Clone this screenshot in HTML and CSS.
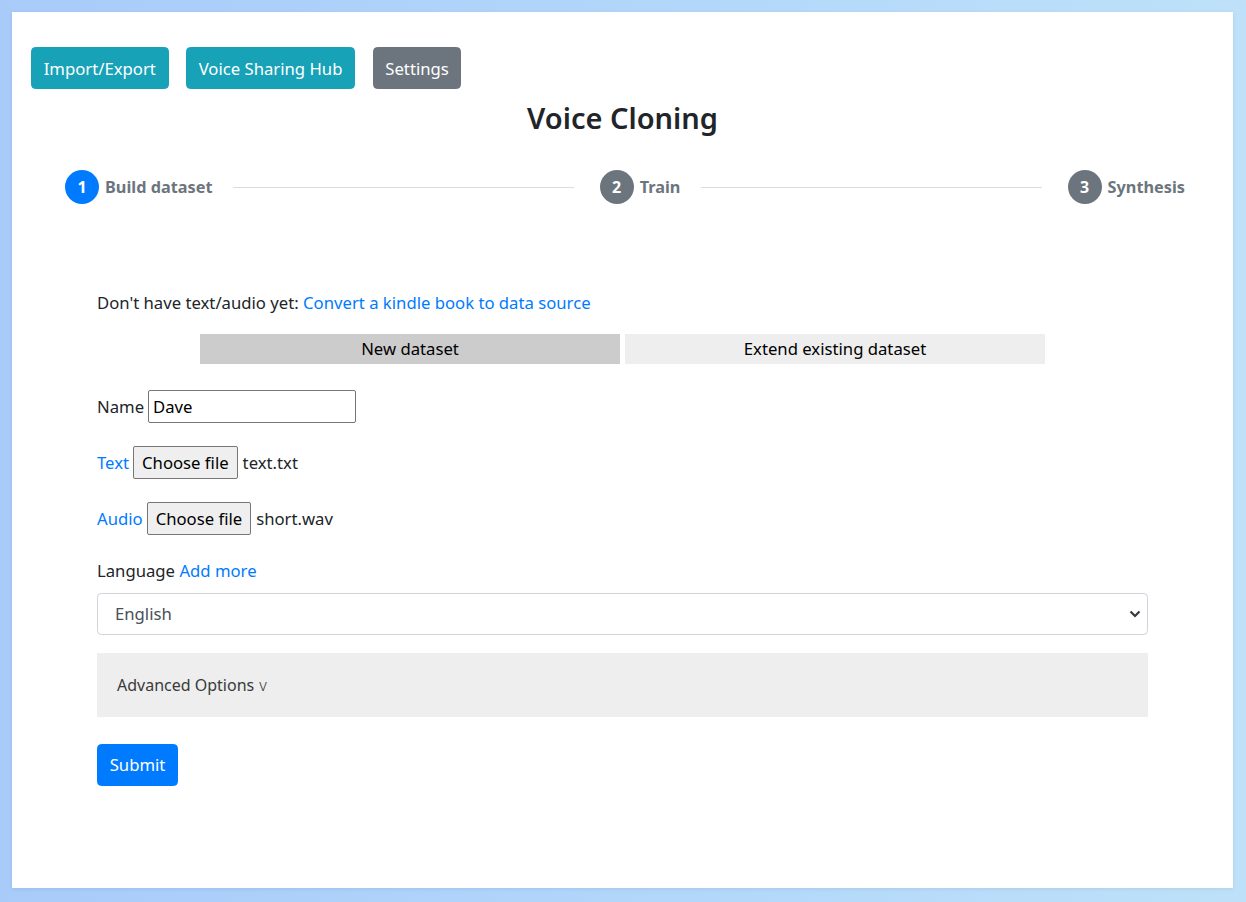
FILE: index.html
```html
<!DOCTYPE html>
<html lang="en">
<head>
<meta charset="utf-8">
<title>Voice Cloning</title>
<link rel="stylesheet" href="styles.css">
</head>
<body>
<div class="card">
  <div class="toolbar">
    <button class="btn btn-info">Import/Export</button>
    <button class="btn btn-info">Voice Sharing Hub</button>
    <button class="btn btn-secondary">Settings</button>
  </div>
  <h1 class="title">Voice Cloning</h1>
  <div class="stepper">
    <div class="step">
      <span class="step-circle active">1</span>
      <span class="step-label">Build dataset</span>
    </div>
    <div class="connector"></div>
    <div class="step">
      <span class="step-circle">2</span>
      <span class="step-label">Train</span>
    </div>
    <div class="connector"></div>
    <div class="step">
      <span class="step-circle">3</span>
      <span class="step-label">Synthesis</span>
    </div>
  </div>

  <div class="content">
    <p class="hint">Don't have text/audio yet: <a class="link" href="#">Convert a kindle book to data source</a></p>
    <div class="tabs">
      <div class="tab selected">New dataset</div>
      <div class="tab">Extend existing dataset</div>
    </div>
    <div class="row row-name">
      <span>Name</span>
      <input class="text-input" type="text" value="Dave">
    </div>
    <div class="row row-file">
      <a class="link" href="#">Text</a>
      <span class="file-btn">Choose file</span>
      <span>text.txt</span>
    </div>
    <div class="row row-file">
      <a class="link" href="#">Audio</a>
      <span class="file-btn">Choose file</span>
      <span>short.wav</span>
    </div>
    <div class="lang-label">Language <a class="link" href="#">Add more</a></div>
    <div class="select-wrap">
      <select class="select"><option>English</option></select>
      <svg class="select-arrow" width="12" height="10" viewBox="0 0 12 10"><path d="M1.5 2.5 L6 7 L10.5 2.5" fill="none" stroke="#343a40" stroke-width="2.2"/></svg>
    </div>
    <div class="advanced">Advanced Options <span class="caret">v</span></div>
    <button class="btn btn-primary submit">Submit</button>
  </div>
</div>
</body>
</html>
```

FILE: styles.css
```css
* { box-sizing: border-box; }
html, body { margin: 0; }
body {
  min-height: 902px;
  padding: 12px 13px 14px 12px;
  background: linear-gradient(90deg, #a8cbfa 0%, #b4d8fa 60%, #bee1f9 100%);
  font-family: "Segoe UI", "Noto Sans", "Open Sans", sans-serif;
  font-size: 16.7px;
  line-height: 26.4px;
  color: #212529;
}
.card {
  background: #fff;
  height: 876px;
  padding: 35px 19px 0;
  box-shadow: 0 1px 4px rgba(0,0,0,0.08);
}
.toolbar { display: flex; gap: 17.5px; }
.btn {
  font: inherit;
  line-height: 26.4px;
  border: 1px solid transparent;
  border-radius: 4.4px;
  padding: 7.5px 11.7px 6.5px;
  color: #fff;
  cursor: pointer;
}
.btn-info { background: #17a2b8; border-color: #17a2b8; }
.btn-secondary { background: #6c757d; border-color: #6c757d; }
.btn-primary { background: #007bff; border-color: #007bff; }
.title {
  margin: 10px 0 0;
  text-align: center;
  font-size: 29px;
  line-height: 37px;
  font-weight: 600;
}
.stepper {
  display: flex;
  align-items: center;
  margin: 34px 29px 0 34px;
}
.step { display: flex; align-items: center; gap: 6px; }
.step-circle {
  width: 34px; height: 34px;
  border-radius: 50%;
  background: #6c757d;
  color: #fff;
  font-weight: 700;
  font-size: 16px;
  display: flex; align-items: center; justify-content: center;
}
.step-circle.active { background: #007bff; }
.step-label { font-weight: 700; color: #6c757d; font-size: 16.3px; }
.connector {
  flex: 1;
  height: 1px;
  background: #dcdcdc;
  margin: 0 26px 0 21px;
}
.content { width: 1051px; margin: 86px auto 0; }
.hint { margin: 0 0 17.6px; }
.link { color: #007bff; text-decoration: none; }
.tabs { display: flex; justify-content: center; gap: 5px; }
.tab {
  width: 420px; height: 30px;
  line-height: 30px;
  text-align: center;
  background: #eeeeee;
  color: #000;
}
.tab.selected { background: #cccccc; }
.row { display: flex; align-items: center; gap: 4px; }
.row-name { margin-top: 26px; }
.row-file { margin-top: 23px; }
.text-input {
  width: 208px; height: 33px;
  font: inherit;
  color: #000;
  border: 1px solid #767676;
  border-radius: 2px;
  padding: 1px 4px;
}
.file-btn {
  height: 33px;
  padding: 0 8px;
  display: inline-flex; align-items: center;
  background: #efefef;
  border: 1px solid #767676;
  border-radius: 2px;
  color: #000;
  margin-right: 1px;
}
.lang-label { margin-top: 23px; }
.select-wrap { position: relative; margin-top: 8px; }
.select {
  width: 100%;
  height: 42px;
  appearance: none;
  -webkit-appearance: none;
  font: inherit;
  color: #495057;
  background: #fff;
  border: 1px solid #ced4da;
  border-radius: 4.4px;
  padding: 0 17px;
}
.select-arrow { position: absolute; right: 7px; top: 16px; }
.advanced {
  margin-top: 18px;
  height: 64px;
  background: #eeeeee;
  color: #3a3a3a;
  display: flex; align-items: center;
  gap: 5px;
  padding-left: 20px;
  font-size: 16px;
}
.caret { font-size: 16px; font-weight: 300; }
.submit { margin-top: 27px; }
```
